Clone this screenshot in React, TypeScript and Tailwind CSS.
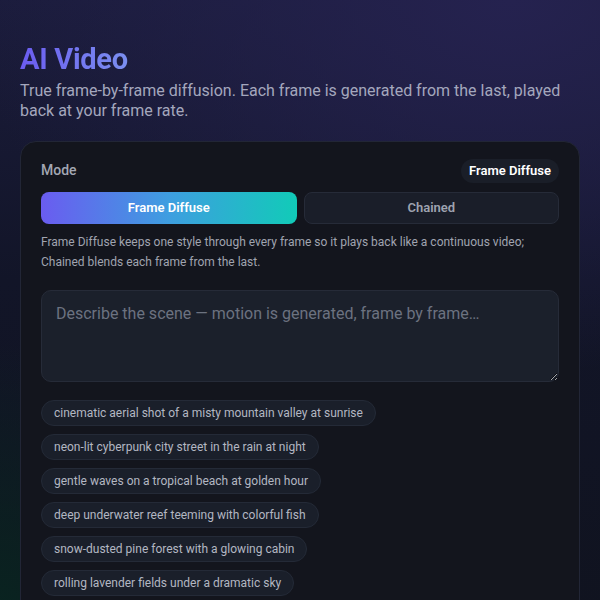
import React from "react";

const chips = [
  "cinematic aerial shot of a misty mountain valley at sunrise",
  "neon-lit cyberpunk city street in the rain at night",
  "gentle waves on a tropical beach at golden hour",
  "deep underwater reef teeming with colorful fish",
  "snow-dusted pine forest with a glowing cabin",
  "rolling lavender fields under a dramatic sky",
];

export default function App() {
  return (
    <div
      className="min-h-[600px] w-full overflow-hidden bg-[#12142a] bg-[radial-gradient(ellipse_90%_60%_at_85%_0%,#25224f_0%,rgba(37,34,79,0)_100%),radial-gradient(ellipse_35%_45%_at_0%_100%,#092420_0%,rgba(9,36,32,0)_100%),linear-gradient(180deg,#1b1c3c_0%,#121528_45%,#10131f_100%)] px-5 pt-[40px] text-white"
      style={{ fontFamily: "Roboto, 'Noto Sans', sans-serif" }}
    >
      <h1 className="bg-[linear-gradient(90deg,#6b5cf0_0%,#7b8ff0_100%)] bg-clip-text text-[29px] font-bold leading-[38px] tracking-[-0.3px] text-transparent w-fit">
        AI Video
      </h1>
      <p className="mt-[3px] text-[16px] leading-[20px] text-[#a4a7bd]">
        True frame-by-frame diffusion. Each frame is generated from the last, played back at your frame rate.
      </p>
      <div className="mt-[20px] rounded-2xl border border-[#222636] bg-[#13151d] px-5 pt-[17px] pb-6">
        <div className="flex items-center justify-between">
          <span className="text-[14px] font-medium text-[#a3a7b3]">Mode</span>
          <span className="rounded-full bg-[#1a1e28] px-2 py-[2px] text-[13px] font-semibold text-white">
            Frame Diffuse
          </span>
        </div>
        <div className="mt-[9px] grid grid-cols-2 gap-[7px]">
          <button className="h-8 rounded-lg bg-[linear-gradient(90deg,#6a5cf0_0%,#3e9ee0_50%,#11cbb8_100%)] text-[13px] font-semibold text-white">
            Frame Diffuse
          </button>
          <button className="h-8 rounded-lg border border-[#262b38] bg-[#1a1e29] text-[13px] font-semibold text-[#9ea3b0]">
            Chained
          </button>
        </div>
        <p className="mt-[8px] text-[12px] leading-5 text-[#a0a4b0]">
          Frame Diffuse keeps one style through every frame so it plays back like a continuous video; Chained blends each frame from the last.
        </p>
        <textarea
          className="mt-[18px] block h-[92px] w-full resize-y rounded-[10px] border border-[#262b38] bg-[#1b202b] px-[14px] py-[11px] text-[16px] text-white placeholder:text-[#6c7280] outline-none"
          placeholder="Describe the scene — motion is generated, frame by frame…"
        />
        <div className="mt-[18px] flex flex-col items-start gap-2">
          {chips.map((c) => (
            <span
              key={c}
              className="rounded-full border border-[#242a37] bg-[#1a1f2a] px-[12px] py-[4px] text-[12px] leading-4 text-[#b3b7c2]"
            >
              {c}
            </span>
          ))}
        </div>
      </div>
    </div>
  );
}
